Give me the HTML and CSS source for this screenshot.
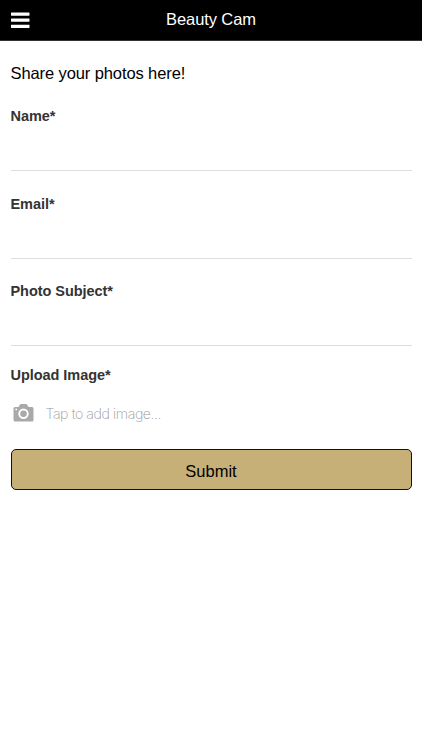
FILE: index.html
```html
<!DOCTYPE html>
<html lang="en">
<head>
<meta charset="utf-8">
<title>Beauty Cam</title>
<link rel="stylesheet" href="styles.css">
</head>
<body>
<header class="bar">
  <button class="menu" aria-label="Menu"><svg width="19" height="17" viewBox="0 0 19 17"><g fill="#fff"><rect y=".5" width="18.500" height="3.200" rx=".4"/><rect y="6.500" width="18.500" height="3.200" rx=".4"/><rect y="12.700" width="18.500" height="3.200" rx=".4"/></g></svg></button>
  <h1 class="title">Beauty Cam</h1>
</header>
<form class="form">
  <p class="intro">Share your photos here!</p>
  <label class="field"><span class="label">Name*</span><input class="input" type="text"></label>
  <label class="field"><span class="label">Email*</span><input class="input" type="email"></label>
  <label class="field"><span class="label">Photo Subject*</span><input class="input" type="text"></label>
  <div class="upload">
    <span class="label">Upload Image*</span>
    <div class="picker">
      <svg class="camera" width="21" height="18" viewBox="0 0 21 18"><path fill="#a9a9a9" fill-rule="evenodd" d="M2 3H5.500L6.700 1Q7.200 0 8.200 0h4.600q1 0 1.500 1L15.500 3H19q1.500 0 1.500 1.500v11.500q0 1.500-1.500 1.500H2Q.5 17.500.5 16V4.500Q.5 3 2 3zM10.500 4.500a5.200 5.200 0 1 0 0 10.400a5.200 5.200 0 1 0 0-10.400zM10.500 6.400a3.300 3.300 0 1 1 0 6.600a3.300 3.300 0 1 1 0-6.600zM3.200 4.500a.9.9 0 1 0 0 1.800a.9.9 0 1 0 0-1.800z"/></svg>
      <span class="hint">Tap to add image...</span>
    </div>
  </div>
  <button class="submit" type="button">Submit</button>
</form>
</body>
</html>
```
FILE: styles.css
```css
* { box-sizing: border-box; }
body { margin: 0; background: #fff; color: #000; font-family: "Liberation Sans", Arial, sans-serif; }
.bar { display: grid; grid-template-columns: 40px 1fr 40px; align-items: center; height: 41px; border-bottom: 1px solid #333; background: #000; color: #fff; }
.menu { display: flex; padding: 0 0 0 11px; border: 0; background: none; }
.title { margin: 0; padding-bottom: 1px; font-size: 16.5px; font-weight: 400; letter-spacing: -0.1px; text-align: center; }
.form { padding: 22px 10.5px 0; }
.intro { margin: 0; height: 42px; font-size: 16.5px; line-height: 20px; letter-spacing: -0.1px; }
.field { display: block; height: 87.5px; }
.label { display: block; color: #333; font-size: 14.5px; font-weight: 700; line-height: 23.5px; letter-spacing: -0.05px; }
.input { display: block; width: 100%; height: 42.7px; padding: 0; border: 0; border-bottom: 1px solid #ddd; background: none; outline: 0; font: inherit; }
.upload { height: 84.5px; margin-top: -3.3px; }
.picker { display: flex; align-items: center; gap: 11.5px; height: 50.6px; padding-left: 2.5px; }
.hint { padding-top: 1px; color: #999; font-family: Inter, "Liberation Sans", sans-serif; font-size: 14.2px; font-weight: 200; letter-spacing: -0.43px; }
.submit { display: block; width: 100%; height: 41px; padding: 4px 0 0; border: 1px solid #111; border-radius: 5px; background: #c7b077; color: #000; font: 16.5px "Liberation Sans", Arial, sans-serif; }
```
